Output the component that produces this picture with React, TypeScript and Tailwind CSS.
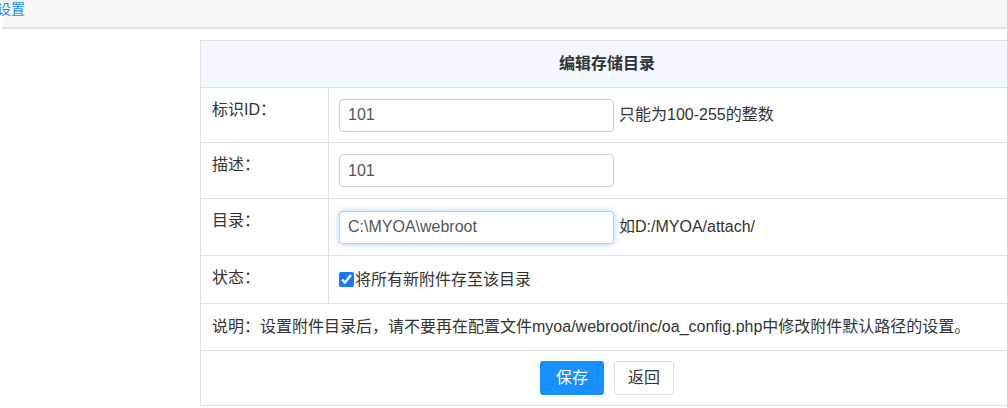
import { useState } from "react";

const font = "font-['Liberation_Sans','Noto_Sans_CJK_SC',sans-serif]";

export default function App() {
  const [checked, setChecked] = useState(true);
  const labelCls = "w-[128px] border border-[#e0e0e0] px-[11px] pt-[12px] align-top text-[16px] leading-[20px] text-[#333]";
  const cellCls = "border border-[#e0e0e0] px-[10px] align-middle";
  const inputCls =
    "h-[33px] w-[275px] rounded-[4px] border border-[#ccc] bg-white px-[8px] text-[16px] text-[#555] outline-none";

  return (
    <div className={`h-[408px] w-[1007px] overflow-hidden bg-white ${font}`}>
      {/* top bar */}
      <div className="ml-[2px] h-[29px] border-b-2 border-[#e3e3e3] bg-[#f7f7f5]">
        <span className="-ml-[5px] block pt-[1px] text-[14px] leading-[16px] text-[#1a8cff]">设置</span>
      </div>

      <div className="pl-[200px] pt-[11px]">
        <table className="w-[814px] border-collapse text-[16px] text-[#333]">
          <thead>
            <tr>
              <th colSpan={2} className="h-[47px] border border-[#e0e0e0] bg-[#f3f8fe] text-center text-[16px] font-bold text-[#333]">
                编辑存储目录
              </th>
            </tr>
          </thead>
          <tbody>
            <tr className="h-[55px]">
              <td className={labelCls}>标识ID：</td>
              <td className={cellCls}>
                <div className="flex items-center">
                  <input className={inputCls} defaultValue="101" />
                  <span className="ml-[5px]">只能为100-255的整数</span>
                </div>
              </td>
            </tr>
            <tr className="h-[56px]">
              <td className={labelCls}>描述：</td>
              <td className={cellCls}>
                <input className={inputCls} defaultValue="101" />
              </td>
            </tr>
            <tr className="h-[57px]">
              <td className={labelCls}>目录：</td>
              <td className={cellCls}>
                <div className="flex items-center">
                  <input
                    className={`${inputCls} border-[#66afe9] shadow-[0_0_6px_rgba(102,175,233,0.6)]`}
                    defaultValue="C:\MYOA\webroot"
                  />
                  <span className="ml-[5px]">如D:/MYOA/attach/</span>
                </div>
              </td>
            </tr>
            <tr className="h-[48px]">
              <td className={labelCls}>状态：</td>
              <td className={cellCls}>
                <label className="flex items-center">
                  <input
                    type="checkbox"
                    checked={checked}
                    onChange={(e) => setChecked(e.target.checked)}
                    className="m-0 h-[15px] w-[15px] accent-[#1677ff]"
                  />
                  <span className="ml-[1px]">将所有新附件存至该目录</span>
                </label>
              </td>
            </tr>
            <tr className="h-[47px]">
              <td colSpan={2} className="border border-[#e0e0e0] px-[11px] align-middle">
                说明：设置附件目录后，请不要再在配置文件myoa/webroot/inc/oa_config.php中修改附件默认路径的设置。
              </td>
            </tr>
            <tr className="h-[55px]">
              <td colSpan={2} className="border border-[#e0e0e0] text-center align-middle">
                <div className="flex justify-center gap-[10px]">
                  <button className="h-[34px] w-[64px] rounded-[3px] bg-[#1890ff] text-[16px] text-white">保存</button>
                  <button className="h-[34px] w-[60px] rounded-[3px] border border-[#ddd] bg-white text-[16px] text-[#333]">
                    返回
                  </button>
                </div>
              </td>
            </tr>
          </tbody>
        </table>
      </div>
    </div>
  );
}
